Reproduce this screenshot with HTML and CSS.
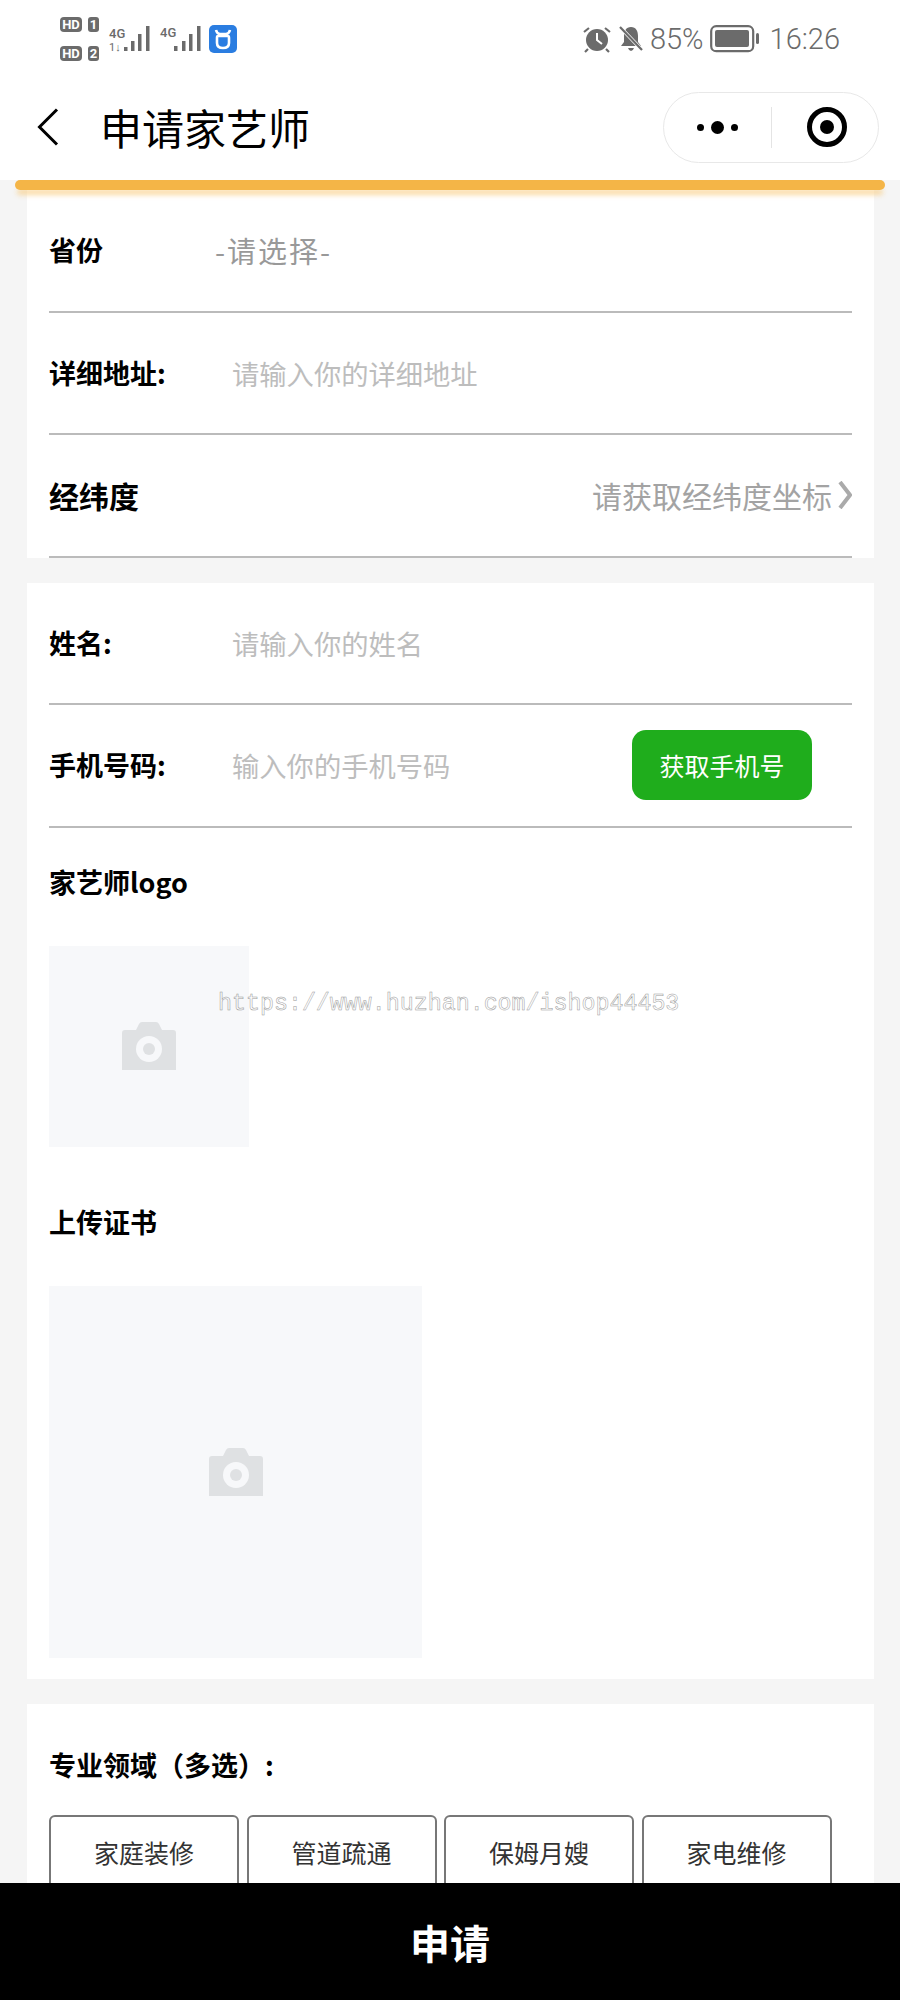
FILE: index.html
```html
<!DOCTYPE html>
<html lang="en">
<head>
    <meta charset="UTF-8">
    <meta name="viewport" content="width=device-width, initial-scale=1.0">
    <title>申请家艺师</title>
    <link rel="stylesheet" href="styles.css">
</head>
<body>

    <div class="status-bar">
        <svg class="status-left" width="180" height="50" viewBox="0 0 180 50">
            <rect x="0" y="2" width="22" height="15" rx="4" fill="#6b6b6b"/>
            <text x="11" y="14" class="hd-text">HD</text>
            <rect x="28" y="2" width="11" height="15" rx="3" fill="#6b6b6b"/>
            <text x="33.5" y="14" class="hd-text">1</text>
            <rect x="0" y="31" width="22" height="15" rx="4" fill="#6b6b6b"/>
            <text x="11" y="43" class="hd-text">HD</text>
            <rect x="28" y="31" width="11" height="15" rx="3" fill="#6b6b6b"/>
            <text x="33.5" y="43" class="hd-text">2</text>

            <text x="49" y="23" class="net-text">4G</text>
            <text x="49" y="36" class="net-small">1↓</text>
            <g fill="#6b6b6b">
                <rect x="64" y="32" width="3.500" height="4"/>
                <rect x="71" y="26" width="3.500" height="10"/>
                <rect x="78" y="19" width="3.500" height="17"/>
                <rect x="86" y="11" width="3.500" height="25"/>
            </g>

            <text x="100" y="22" class="net-text">4G</text>
            <g fill="#6b6b6b">
                <rect x="114" y="31" width="3.500" height="5"/>
                <rect x="122" y="26" width="3.500" height="10"/>
                <rect x="129" y="19" width="3.500" height="17"/>
                <rect x="137" y="11" width="3.500" height="25"/>
            </g>

            <rect x="149" y="10" width="28" height="28" rx="5" fill="#2a7de1"/>
            <path d="M156 15 q1 4 4 4 h6 q3 0 4-4 M158 21 h10 q1 0 1 2 v5 q0 5-6 5 t-6-5 v-5 q0-2 1-2z" fill="none" stroke="#fff" stroke-width="2.6"/>
        </svg>

        <div class="status-right">
            <svg width="30" height="28" viewBox="0 0 30 28">
                <circle cx="15" cy="15" r="11" fill="#6b6b6b"/>
                <path d="M15 8v7l5 4" fill="none" stroke="#fff" stroke-width="2"/>
                <path d="M2 7l5-4M28 7l-5-4M6 24l-3 3M24 24l3 3" stroke="#6b6b6b" stroke-width="2.2"/>
            </svg>
            <svg class="bell" width="26" height="28" viewBox="0 0 26 28">
                <path d="M13 2c5 0 7 4 7 9v6l3 4H3l3-4v-6c0-5 2-9 7-9z" fill="#6b6b6b"/>
                <path d="M10 23h6q-1 3-3 3t-3-3z" fill="#6b6b6b"/>
                <path d="M2 2l22 23" stroke="#fff" stroke-width="3.500"/>
                <path d="M2 2l22 23" stroke="#6b6b6b" stroke-width="2.2"/>
            </svg>
            <span class="status-text battery-text">85%</span>
            <svg class="battery" width="50" height="28" viewBox="0 0 50 28">
                <rect x="1.2" y="1.2" width="42" height="25" rx="5" fill="none" stroke="#6b6b6b" stroke-width="2.2"/>
                <rect x="5" y="5" width="34" height="17" rx="2" fill="#6b6b6b"/>
                <rect x="46" y="8" width="3" height="11" rx="1.5" fill="#6b6b6b"/>
            </svg>
            <span class="status-text clock">16:26</span>
        </div>
    </div>

    <div class="nav-bar">
        <svg class="back" width="22" height="38" viewBox="0 0 22 38">
            <path d="M20 1.5L2.5 19 20 36.500" fill="none" stroke="#000" stroke-width="3"/>
        </svg>
        <div class="nav-title">申请家艺师</div>
        <div class="capsule">
            <div class="capsule-part">
                <span class="dot"></span><span class="dot dot-big"></span><span class="dot"></span>
            </div>
            <div class="capsule-line"></div>
            <div class="capsule-part">
                <span class="target"></span>
            </div>
        </div>
    </div>

    <div class="yellow-bar"></div>

    <div class="card card-first">
        <div class="row">
            <div class="label">省份</div>
            <div class="select-text">-请选择-</div>
        </div>
        <div class="row">
            <div class="label">详细地址:</div>
            <div class="placeholder">请输入你的详细地址</div>
        </div>
        <div class="row">
            <div class="label label-large">经纬度</div>
            <div class="coords">请获取经纬度坐标</div>
            <svg class="arrow" width="14" height="28" viewBox="0 0 14 28">
                <path d="M2 1l10 13L2 27" fill="none" stroke="#aaa" stroke-width="4"/>
            </svg>
        </div>
    </div>

    <div class="card card-middle">
        <div class="row">
            <div class="label">姓名:</div>
            <div class="placeholder">请输入你的姓名</div>
        </div>
        <div class="row">
            <div class="label">手机号码:</div>
            <div class="placeholder">输入你的手机号码</div>
            <div class="phone-button">获取手机号</div>
        </div>

        <div class="block-label">家艺师logo</div>
        <div class="upload upload-small">
            <svg width="54" height="48" viewBox="0 0 54 48">
                <path d="M3 8h11l3-6q1-2 3-2h14q2 0 3 2l3 6h11q3 0 3 3v37H0V11q0-3 3-3z" fill="#dfe1e3"/>
                <circle cx="27" cy="27" r="13" fill="#f7f8fa"/>
                <circle cx="27" cy="27" r="6" fill="#dfe1e3"/>
            </svg>
        </div>

        <div class="block-label">上传证书</div>
        <div class="upload upload-large">
            <svg width="54" height="48" viewBox="0 0 54 48">
                <path d="M3 8h11l3-6q1-2 3-2h14q2 0 3 2l3 6h11q3 0 3 3v37H0V11q0-3 3-3z" fill="#dfe1e3"/>
                <circle cx="27" cy="27" r="13" fill="#f7f8fa"/>
                <circle cx="27" cy="27" r="6" fill="#dfe1e3"/>
            </svg>
        </div>
    </div>

    <div class="card card-last">
        <div class="block-label">专业领域（多选）:</div>
        <div class="options">
            <div class="option">家庭装修</div>
            <div class="option">管道疏通</div>
            <div class="option">保姆月嫂</div>
            <div class="option">家电维修</div>
        </div>
    </div>

    <div class="watermark">https://www.huzhan.com/ishop44453</div>

    <div class="submit-bar">申请</div>

</body>
</html>
```

FILE: styles.css
```css
html, body {
    margin: 0;
    padding: 0;
}

body {
    position: relative;
    height: 2000px;
    overflow: hidden;
    background-color: #f5f5f5;
    color: #000;
    font-family: "Noto Sans CJK SC", "Noto Sans", sans-serif;
}

/* status bar */
.status-bar {
    display: flex;
    justify-content: space-between;
    align-items: center;
    height: 60px;
    padding: 20px 60px 0 60px;
    box-sizing: border-box;
    background-color: #fff;
}

.status-left {
    display: block;
}

.hd-text {
    font-family: Roboto, sans-serif;
    font-size: 13px;
    font-weight: 700;
    fill: #fff;
    text-anchor: middle;
}

.net-text {
    font-family: Roboto, sans-serif;
    font-size: 13px;
    font-weight: 500;
    fill: #6b6b6b;
}

.net-small {
    font-family: Roboto, sans-serif;
    font-size: 11px;
    fill: #6b6b6b;
}

.status-right {
    display: flex;
    align-items: center;
    margin-top: -2px;
    color: #6b6b6b;
}

.bell {
    margin-left: 6px;
}

.status-text {
    font-family: Roboto, sans-serif;
    font-size: 29px;
    font-weight: 300;
    line-height: 30px;
}

.battery-text {
    margin-left: 6px;
}

.battery {
    margin-left: 6px;
}

.clock {
    margin-left: 10px;
}

/* nav */
.nav-bar {
    display: flex;
    align-items: center;
    height: 120px;
    padding: 14px 21px 0 37px;
    box-sizing: border-box;
    background-color: #fff;
}

.nav-title {
    margin-left: 41px;
    font-size: 42px;
    line-height: 50px;
    flex: 1;
}

.capsule {
    display: flex;
    align-items: center;
    width: 216px;
    height: 71px;
    border: 1px solid #e8e8e8;
    border-radius: 36px;
    box-sizing: border-box;
}

.capsule-part {
    flex: 1;
    display: flex;
    justify-content: center;
    align-items: center;
    gap: 7px;
}

.capsule-line {
    width: 1px;
    height: 41px;
    background-color: #e4e4e4;
}

.dot {
    width: 7px;
    height: 7px;
    border-radius: 50%;
    background-color: #000;
}

.dot-big {
    width: 13px;
    height: 13px;
}

.target {
    position: relative;
    width: 40px;
    height: 40px;
    margin-left: 4px;
    border: 5px solid #000;
    border-radius: 50%;
    box-sizing: border-box;
}

.target::after {
    content: "";
    position: absolute;
    top: 8px;
    left: 8px;
    width: 14px;
    height: 14px;
    border-radius: 50%;
    background-color: #000;
}

.yellow-bar {
    position: relative;
    z-index: 2;
    height: 10px;
    margin: 0 15px;
    border-radius: 5px;
    background-color: #f4b547;
    box-shadow: 0 7px 5px -2px rgba(250, 205, 130, 0.7);
}

/* cards */
.card {
    margin: 0 26px 25px 27px;
    padding: 0 22px;
    background-color: #fff;
}

.card-middle {
    padding-bottom: 21px;
}

.card-last {
    padding-top: 41px;
}

.row {
    display: flex;
    align-items: center;
    height: 122.500px;
    border-bottom: 2.500px solid #bbb;
    box-sizing: border-box;
}

.label {
    width: 183px;
    font-size: 27px;
    font-weight: 700;
    line-height: 40px;
}

.label-large {
    width: auto;
    font-size: 30px;
}

.placeholder {
    font-size: 27.300px;
    line-height: 40px;
    color: #bdbdbd;
}

.select-text {
    margin-left: -17px;
    font-size: 29px;
    letter-spacing: 2px;
    line-height: 40px;
    color: #999;
}

.coords {
    margin-left: auto;
    font-size: 30px;
    line-height: 40px;
    color: #a3a3a3;
}

.arrow {
    margin-left: 6px;
}

.phone-button {
    display: flex;
    justify-content: center;
    align-items: center;
    width: 180px;
    height: 70px;
    margin-left: auto;
    margin-right: 40px;
    border-radius: 14px;
    background-color: #1fad1c;
    color: #fff;
    font-size: 25px;
}

.block-label {
    font-size: 27px;
    font-weight: 700;
    line-height: 40px;
}

.row + .block-label {
    margin-top: 34px;
}

.upload {
    display: flex;
    justify-content: center;
    align-items: center;
    margin-top: 44px;
    background-color: #f7f8fa;
}

.upload-small {
    width: 200px;
    height: 201px;
    margin-bottom: 55px;
}

.upload-large {
    width: 373px;
    height: 372px;
}

.options {
    display: flex;
    gap: 7.500px;
    margin-top: 30.500px;
}

.option {
    display: flex;
    justify-content: center;
    align-items: center;
    width: 190px;
    height: 74px;
    border: 2.500px solid #777;
    border-radius: 6px;
    box-sizing: border-box;
    background-color: #fff;
    color: #333;
    font-size: 25px;
}

/* things on top of the page */
.watermark {
    position: absolute;
    top: 990px;
    left: 218px;
    font-family: "Liberation Mono", monospace;
    font-size: 23.300px;
    line-height: 28px;
    color: transparent;
    -webkit-text-stroke: 0.5px #999;
}

.submit-bar {
    position: absolute;
    left: 0;
    right: 0;
    bottom: 0;
    display: flex;
    justify-content: center;
    align-items: center;
    height: 117px;
    background-color: #000;
    color: #fff;
    font-size: 40px;
    font-weight: 700;
}
```
